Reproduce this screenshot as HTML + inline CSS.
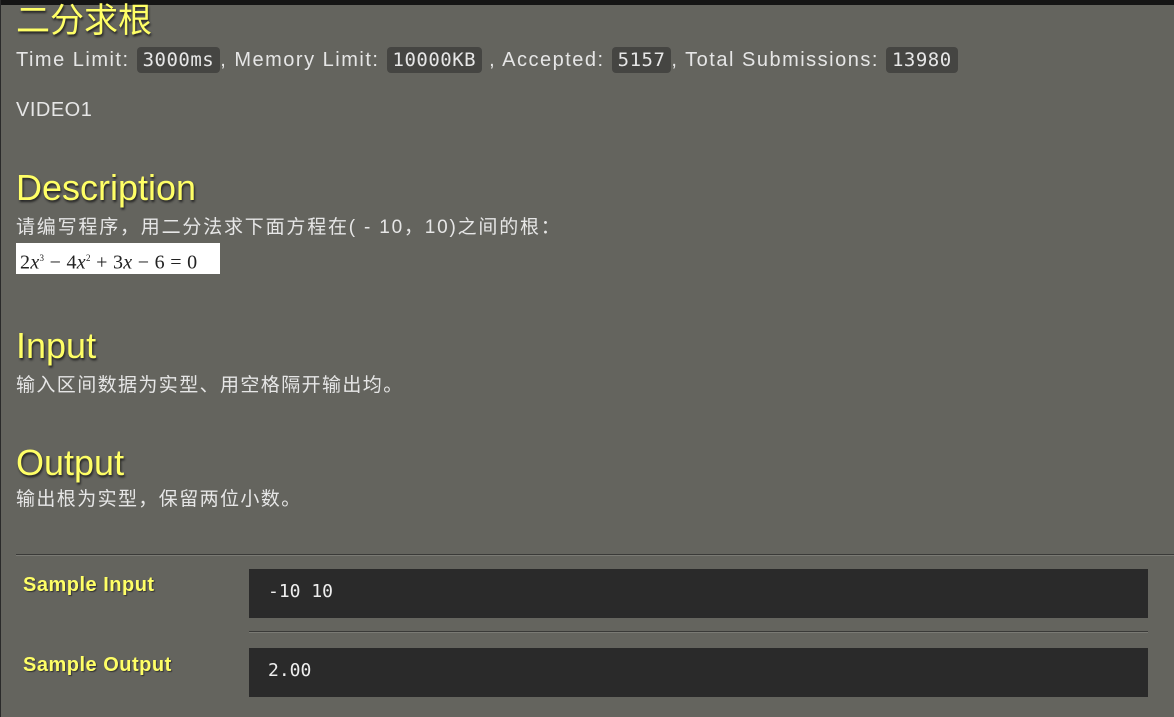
<!DOCTYPE html>
<html><head><meta charset="utf-8"><style>
body{margin:0;width:1174px;height:717px;overflow:hidden;background:#64645e;font-family:"Liberation Sans","Noto Sans CJK SC",sans-serif;color:#e6e6e6;position:relative}
.top{position:absolute;left:0;top:0;width:1174px;height:5px;background:#151515}
.lb{position:absolute;left:0;top:0;width:1px;height:717px;background:#2a2a2a}
.a{position:absolute;white-space:nowrap}
.h{color:#ffff66;text-shadow:1px 2px 2px #222;font-size:36px;line-height:40px}
.t{font-size:20px;line-height:24px;letter-spacing:1.5px}
.c{background:#454542;border-radius:4px;padding:2px 6px;font-family:"DejaVu Sans Mono",monospace;font-size:19px;letter-spacing:0.5px}
.z{font-size:19px;line-height:22px;letter-spacing:1.8px}
.box{position:absolute;left:249px;width:899px;height:49px;background:#2a2a2a;font-family:"DejaVu Sans Mono",monospace;font-size:18px;color:#eee;line-height:46px;padding-left:19px;box-sizing:border-box}
.sl{position:absolute;left:23px;color:#ffff66;font-weight:bold;font-size:20px;letter-spacing:0.5px;text-shadow:1px 1px 1px #333}
</style></head><body>
<div class="top"></div><div class="lb"></div>
<div class="a h" style="left:16px;top:1px;font-size:34px">二分求根</div>
<div class="a t" style="left:16px;top:48px">Time Limit: <span class="c">3000ms</span>, Memory Limit: <span class="c">10000KB</span> , Accepted: <span class="c">5157</span>, Total Submissions: <span class="c">13980</span></div>
<div class="a t" style="left:16px;top:98px;letter-spacing:0.5px">VIDEO1</div>
<div class="a h" style="left:16px;top:168px">Description</div>
<div class="a z" style="left:16px;top:217px">请编写程序，用二分法求下面方程在( - 10，10)之间的根：</div>
<div class="a" style="left:16px;top:243px;width:204px;height:31px;background:#fff;color:#222;font-family:'Liberation Serif',serif;font-size:20px;line-height:31px;padding-left:4px;letter-spacing:0.3px;box-sizing:border-box;overflow:hidden">2<i>x</i><sup style="font-size:9px">3</sup> − 4<i>x</i><sup style="font-size:9px">2</sup> + 3<i>x</i> − 6 = 0</div>
<div class="a h" style="left:16px;top:326px">Input</div>
<div class="a z" style="left:16px;top:375px;letter-spacing:1.4px">输入区间数据为实型、用空格隔开输出均。</div>
<div class="a h" style="left:16px;top:443px">Output</div>
<div class="a z" style="left:16px;top:489px;letter-spacing:1.4px">输出根为实型，保留两位小数。</div>
<div class="a" style="left:16px;top:554px;width:1158px;height:1px;background:#3a3a38;border-bottom:1px solid #7a7a74"></div>
<div class="sl" style="top:574px">Sample Input</div>
<div class="box" style="top:569px">-10 10</div>
<div class="a" style="left:249px;top:631px;width:899px;height:1px;background:#3a3a38;border-bottom:1px solid #7a7a74"></div>
<div class="sl" style="top:654px">Sample Output</div>
<div class="box" style="top:648px">2.00</div>
</body></html>
